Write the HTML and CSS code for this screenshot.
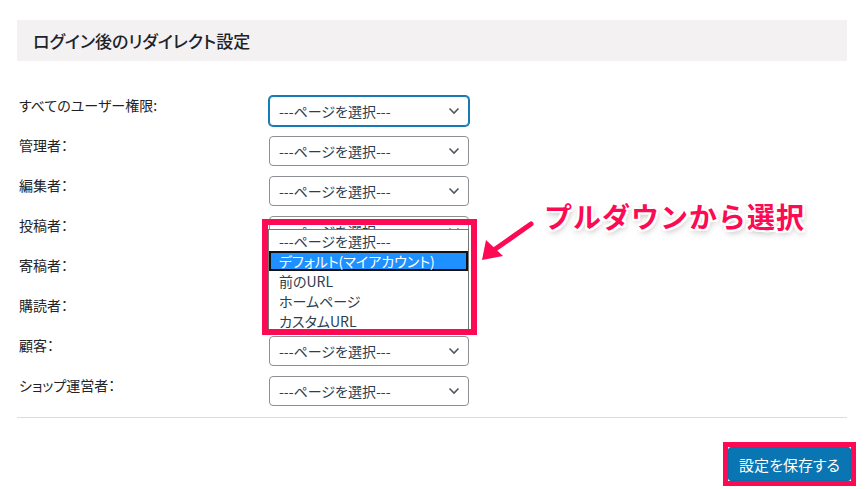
FILE: index.html
```html
<!DOCTYPE html>
<html lang="ja">
<head>
  <meta charset="UTF-8" />
  <meta name="viewport" content="width=device-width, initial-scale=1.0" />
  <title>ログイン後のリダイレクト設定</title>
  <link rel="stylesheet" href="styles.css">
</head>
<body>
  <div class="wrap">
    <h2 class="section-title">ログイン後のリダイレクト設定</h2>

    <div class="form-rows">
      <label class="row-label">すべてのユーザー権限:</label>
      <div class="select-box is-focused">
        <select><option>---ページを選択---</option></select>
        <svg class="chevron" width="12" height="8" viewBox="0 0 12 8"><path d="M1.5 1.5 6 6l4.5-4.5" /></svg>
      </div>

      <label class="row-label">管理者：</label>
      <div class="select-box">
        <select><option>---ページを選択---</option></select>
        <svg class="chevron" width="12" height="8" viewBox="0 0 12 8"><path d="M1.5 1.5 6 6l4.5-4.5" /></svg>
      </div>

      <label class="row-label">編集者：</label>
      <div class="select-box">
        <select><option>---ページを選択---</option></select>
        <svg class="chevron" width="12" height="8" viewBox="0 0 12 8"><path d="M1.5 1.5 6 6l4.5-4.5" /></svg>
      </div>

      <label class="row-label">投稿者：</label>
      <div class="select-box is-open">
        <select><option>---ページを選択---</option></select>
        <svg class="chevron" width="12" height="8" viewBox="0 0 12 8"><path d="M1.5 1.5 6 6l4.5-4.5" /></svg>
        <ul class="dropdown-list">
          <li>---ページを選択---</li>
          <li class="is-active">デフォルト(マイアカウント)</li>
          <li>前のURL</li>
          <li>ホームページ</li>
          <li>カスタムURL</li>
        </ul>
        <div class="mark-box"></div>
      </div>

      <label class="row-label">寄稿者：</label>
      <div class="select-box">
        <select><option>---ページを選択---</option></select>
        <svg class="chevron" width="12" height="8" viewBox="0 0 12 8"><path d="M1.5 1.5 6 6l4.5-4.5" /></svg>
      </div>

      <label class="row-label">購読者：</label>
      <div class="select-box">
        <select><option>---ページを選択---</option></select>
        <svg class="chevron" width="12" height="8" viewBox="0 0 12 8"><path d="M1.5 1.5 6 6l4.5-4.5" /></svg>
      </div>

      <label class="row-label">顧客：</label>
      <div class="select-box">
        <select><option>---ページを選択---</option></select>
        <svg class="chevron" width="12" height="8" viewBox="0 0 12 8"><path d="M1.5 1.5 6 6l4.5-4.5" /></svg>
      </div>

      <label class="row-label">ショップ運営者：</label>
      <div class="select-box">
        <select><option>---ページを選択---</option></select>
        <svg class="chevron" width="12" height="8" viewBox="0 0 12 8"><path d="M1.5 1.5 6 6l4.5-4.5" /></svg>
      </div>
    </div>

    <hr class="divider" />

    <div class="actions">
      <span class="mark-button"><button class="save-btn">設定を保存する</button></span>
    </div>
  </div>

  <div class="callout">プルダウンから選択</div>
  <svg class="callout-arrow" width="60" height="50" viewBox="478 215 60 50">
    <line x1="531" y1="224" x2="491" y2="252" stroke="#fc0a54" stroke-width="5" stroke-linecap="round" />
    <polygon points="482,260 486,240 503,256" fill="#fc0a54" />
  </svg>
</body>
</html>
```

FILE: styles.css
```css
body {
  margin: 0;
  background: #fff;
  font-family: "Noto Sans CJK JP", "Noto Sans", sans-serif;
  color: #1d2327;
}
.wrap {
  padding: 20px 19px 0 17px;
}
.section-title {
  margin: 0;
  height: 41px;
  display: flex;
  align-items: center;
  padding-left: 16px;
  background: #f3f1f2;
  font-size: 17px;
  font-weight: 500;
  font-feature-settings: "palt";
  color: #1d2327;
}
.form-rows {
  margin-top: 35px;
  display: grid;
  grid-template-columns: 252px 200px;
  row-gap: 10px;
}
.row-label {
  padding-left: 2px;
  font-size: 14px;
  line-height: 18px;
  font-feature-settings: "palt";
  color: #1d2327;
}
.select-box {
  position: relative;
  height: 30px;
}
.select-box.is-open {
  z-index: 5;
}
.select-box select {
  appearance: none;
  -webkit-appearance: none;
  width: 100%;
  height: 30px;
  margin: 0;
  padding: 0 24px 0 9px;
  border: 1px solid #8c8f94;
  border-radius: 4px;
  background: #fff;
  font-family: inherit;
  font-size: 14px;
  font-feature-settings: "palt";
  color: #2c3e50;
}
.select-box.is-focused select {
  border-color: #1679b8;
  box-shadow: 0 0 0 1px #1679b8;
}
.chevron {
  position: absolute;
  right: 9px;
  top: 11px;
  fill: none;
  stroke: #50575e;
  stroke-width: 1.6;
  pointer-events: none;
}
.dropdown-list {
  position: absolute;
  left: -1px;
  top: 13px;
  width: 201px;
  margin: 0;
  padding: 1px 0;
  list-style: none;
  background: #fff;
  border: 1px solid #767676;
  box-sizing: border-box;
  height: 102px;
}
.dropdown-list li {
  height: 20px;
  line-height: 20px;
  padding-left: 10px;
  font-size: 14px;
  font-feature-settings: "palt";
  color: #2c3e50;
}
.dropdown-list li.is-active {
  background: #1e90ff;
  color: #fff;
  box-shadow: inset 0 0 0 2px #111;
}
.mark-box {
  position: absolute;
  left: -7px;
  top: 3px;
  width: 215px;
  height: 116px;
  border: 6px solid #fc0a54;
  box-sizing: border-box;
}
.divider {
  margin: 11px 0 0;
  border: 0;
  border-top: 1px solid #dcdcde;
}
.actions {
  display: flex;
  justify-content: flex-end;
  margin-top: 24px;
  margin-right: -9px;
}
.mark-button {
  display: inline-flex;
  border: 5px solid #fc0a54;
}
.save-btn {
  width: 123px;
  height: 34px;
  margin: 0;
  border: 1px solid #0a6fa8;
  border-radius: 3px;
  background: #0a75b3;
  color: #fff;
  font-family: inherit;
  font-size: 15px;
  font-feature-settings: "palt";
  cursor: pointer;
}
.callout {
  position: absolute;
  left: 544px;
  top: 196px;
  font-size: 28px;
  line-height: 40px;
  font-weight: 700;
  letter-spacing: 1px;
  color: #fc0a54;
  text-shadow:
    -2px 0 0 #fff, 2px 0 0 #fff, 0 -2px 0 #fff, 0 2px 0 #fff,
    -2px -2px 0 #fff, 2px 2px 0 #fff, -2px 2px 0 #fff, 2px -2px 0 #fff,
    1px 3px 6px rgba(0, 0, 0, 0.35);
}
.callout-arrow {
  position: absolute;
  left: 478px;
  top: 215px;
}
```
